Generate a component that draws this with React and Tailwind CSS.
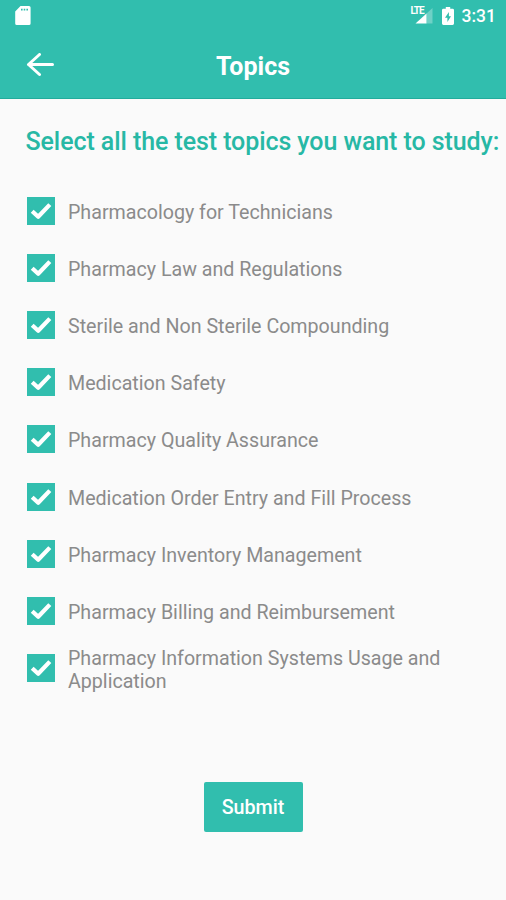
const topics = [
  'Pharmacology for Technicians',
  'Pharmacy Law and Regulations',
  'Sterile and Non Sterile Compounding',
  'Medication Safety',
  'Pharmacy Quality Assurance',
  'Medication Order Entry and Fill Process',
  'Pharmacy Inventory Management',
  'Pharmacy Billing and Reimbursement',
  'Pharmacy Information Systems Usage and Application',
]

const StatusBar = () => (
  <div className="flex h-8 items-center justify-between pl-[15px] pr-[10px] text-white">
    <svg className="mb-0.5 h-[19px] w-4" viewBox="0 0 16 19" fill="currentColor" aria-hidden="true">
      <path
        fillRule="evenodd"
        d="M5.5 0H14a1.6 1.6 0 0 1 1.6 1.6v15.8A1.6 1.6 0 0 1 14 19H1.8a1.6 1.6 0 0 1-1.6-1.6V5.4zM6 2.8v1.8h1.6V2.8zM8.7 2.8v1.8h1.6V2.8zM11.4 2.8v1.8H13V2.8z"
      />
    </svg>
    <div className="flex items-center">
      <div className="relative h-5 w-[22px]">
        <span className="absolute left-0 top-0 text-[10px] font-bold leading-[10px] tracking-[-1px]">LTE</span>
        <svg className="h-5 w-[22px]" viewBox="0 0 22 20" fill="currentColor" aria-hidden="true">
          <path d="M15.5 7.5l6-5.500v15.500h-6z" opacity="0.3" />
          <path d="M4.5 17.5l11-10v10z" />
        </svg>
      </div>
      <svg className="ml-[9px] h-[18px] w-3" viewBox="0 0 12 18" fill="currentColor" aria-hidden="true">
        <path
          fillRule="evenodd"
          d="M3.8 0h4.4v1.8h2.4A1.4 1.4 0 0 1 12 3.2v13.4a1.4 1.4 0 0 1-1.4 1.4H1.4A1.4 1.4 0 0 1 0 16.6V3.2a1.4 1.4 0 0 1 1.4-1.4h2.4zM6.9 5 3 10.8h2.4V15L9 9.2H6.9z"
        />
      </svg>
      <span className="ml-[8px] text-[17.5px] font-medium leading-8">3:31</span>
    </div>
  </div>
)

const Header = () => (
  <header className="h-[99px] border-b border-[#22ac9c] bg-[#31beae]">
    <StatusBar />
    <div className="grid h-[66px] grid-cols-[1fr_auto_1fr] items-center px-[26px] text-white">
      <button type="button" aria-label="Back" className="w-7">
        <svg
          className="h-6 w-7"
          viewBox="0 0 28 24"
          fill="none"
          stroke="currentColor"
          strokeWidth="3"
          strokeLinecap="round"
          strokeLinejoin="round"
          aria-hidden="true"
        >
          <path d="M26.5 11.5h-24M13.5 1.5l-11 10 11 10" />
        </svg>
      </button>
      <h1 className="pt-[3px] text-[25px] font-bold">Topics</h1>
    </div>
  </header>
)

const TopicRow = ({ label }) => (
  <label className="flex h-[57.2px] items-center">
    <input type="checkbox" defaultChecked className="sr-only" />
    <span className="flex size-[28px] shrink-0 items-center justify-center bg-[#31beae]">
      <svg className="size-[28px]" viewBox="0 0 28 28" fill="none" stroke="white" strokeWidth="4.2" aria-hidden="true">
        <path d="m5.2 14.2 6 5.6L22.8 7.6" strokeLinejoin="round" />
      </svg>
    </span>
    <span className="ml-[13.4px] pt-[3px] text-[19.65px] leading-[23px] text-[#8b8b8b]">{label}</span>
  </label>
)

export default function App() {
  return (
    <div className="flex h-[900px] w-[506px] flex-col overflow-hidden bg-[#fafafa] font-['Roboto',sans-serif]">
      <Header />
      <main className="flex flex-col">
        <h2 className="mt-[27px] whitespace-nowrap pl-[25.5px] text-[25px] font-medium leading-8 tracking-[-0.08px] text-[#27b8a5]">
          Select all the test topics you want to study:
        </h2>
        <div className="mt-[24px] flex flex-col pl-[26.6px] pr-[50px]">
          {topics.map((topic) => (
            <TopicRow key={topic} label={topic} />
          ))}
        </div>
        <button
          type="button"
          className="mt-[85px] h-[50px] w-[99px] self-center rounded-[2px] bg-[#31beae] pt-[3px] text-[19.7px] font-medium text-white"
        >
          Submit
        </button>
      </main>
    </div>
  )
}
